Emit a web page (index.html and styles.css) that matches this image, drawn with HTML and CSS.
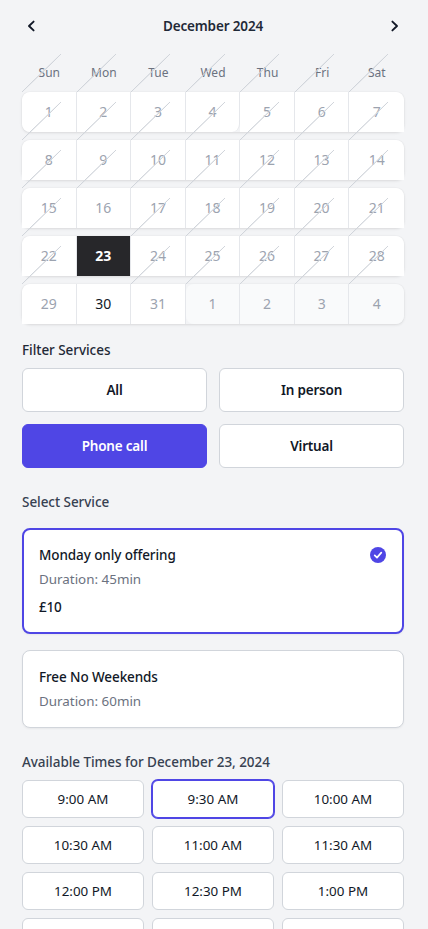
FILE: index.html
```html
<!DOCTYPE html>
<html lang="en">
<head>
<meta charset="utf-8">
<title>Book a service</title>
<link rel="stylesheet" href="styles.css">
</head>
<body>
<main class="page">
  <header class="month-bar">
    <button class="nav-btn" aria-label="Previous month"><svg viewBox="0 0 18 18" width="18" height="18"><path d="M11.6 4.6 7 9l4.6 4.4" class="chev"/></svg></button>
    <h1 class="month-title">December 2024</h1>
    <button class="nav-btn" aria-label="Next month"><svg viewBox="0 0 18 18" width="18" height="18"><path d="M6.4 4.6 11 9l-4.6 4.4" class="chev"/></svg></button>
  </header>

  <section class="calendar">
    <div class="weekdays">
      <div class="wd">Sun</div><div class="wd">Mon</div><div class="wd">Tue</div><div class="wd">Wed</div><div class="wd">Thu</div><div class="wd">Fri</div><div class="wd">Sat</div>
    </div>
    <div class="week">
      <div class="day off tl bl">1</div><div class="day off">2</div><div class="day off">3</div><div class="day off br">4</div><div class="day off">5</div><div class="day off">6</div><div class="day off tr">7</div>
    </div>
    <div class="week">
      <div class="day off tl">8</div><div class="day off">9</div><div class="day off">10</div><div class="day off">11</div><div class="day off">12</div><div class="day off">13</div><div class="day off tr">14</div>
    </div>
    <div class="week">
      <div class="day off tl">15</div><div class="day">16</div><div class="day off">17</div><div class="day off">18</div><div class="day off">19</div><div class="day off">20</div><div class="day off tr">21</div>
    </div>
    <div class="week">
      <div class="day off tl">22</div><div class="day selected">23</div><div class="day off">24</div><div class="day off">25</div><div class="day off">26</div><div class="day off">27</div><div class="day off tr">28</div>
    </div>
    <div class="week">
      <div class="day tl">29</div><div class="day active">30</div><div class="day">31</div><div class="day next tl bl">1</div><div class="day next">2</div><div class="day next">3</div><div class="day next tr br">4</div>
    </div>
  </section>

  <h2 class="label label-strong filter-label">Filter Services</h2>
  <div class="filters">
    <button class="filter">All</button>
    <button class="filter">In person</button>
    <button class="filter filter-on">Phone call</button>
    <button class="filter">Virtual</button>
  </div>

  <h2 class="label section-label">Select Service</h2>
  <div class="services">
    <article class="service service-on">
      <div class="service-head">
        <h3 class="service-name">Monday only offering</h3>
        <svg class="tick" viewBox="0 0 16 16" width="16" height="16"><circle cx="8" cy="8" r="8" fill="#4f46e5"/><path d="M4.7 8.3 7 10.6l4.3-5" fill="none" stroke="#fff" stroke-width="1.7" stroke-linecap="round" stroke-linejoin="round"/></svg>
      </div>
      <p class="service-meta">Duration: 45min</p>
      <p class="service-price">£10</p>
    </article>
    <article class="service">
      <h3 class="service-name">Free No Weekends</h3>
      <p class="service-meta">Duration: 60min</p>
    </article>
  </div>

  <h2 class="label section-label times-label">Available Times for December 23, 2024</h2>
  <div class="times">
    <button class="time">9:00 AM</button>
    <button class="time time-on">9:30 AM</button>
    <button class="time">10:00 AM</button>
    <button class="time">10:30 AM</button>
    <button class="time">11:00 AM</button>
    <button class="time">11:30 AM</button>
    <button class="time">12:00 PM</button>
    <button class="time">12:30 PM</button>
    <button class="time">1:00 PM</button>
    <button class="time" aria-hidden="true"></button>
    <button class="time" aria-hidden="true"></button>
    <button class="time" aria-hidden="true"></button>
  </div>
</main>
</body>
</html>
```
FILE: styles.css
```css
* { box-sizing: border-box; }
html, body { margin: 0; height: 100%; overflow: hidden; }
body {
  background: #f3f4f6;
  color: #111827;
  font-family: "Noto Sans", "Open Sans", sans-serif;
  font-size: 14px;
  line-height: 20px;
}
button { font: inherit; color: inherit; cursor: pointer; }
h1, h2, h3, p { margin: 0; }

.page { padding: 0 24px 0 22px; }

.month-bar { height: 53px; display: flex; align-items: center; justify-content: space-between; padding-bottom: 1px; }
.nav-btn { width: 18px; height: 18px; padding: 0; border: 0; background: none; display: flex; }
.chev { fill: none; stroke: #111827; stroke-width: 1.9; stroke-linecap: round; stroke-linejoin: round; }
.month-title { font-size: 13.5px; letter-spacing: -.15px; font-weight: 600; color: #1f2937; }

.calendar { display: flex; flex-direction: column; gap: 8px; }
.weekdays, .week { display: grid; grid-template-columns: repeat(7, 1fr); }
.weekdays { height: 39px; margin-bottom: -8px; }
.wd {
  position: relative;
  height: 39px;
  display: flex; align-items: center; justify-content: center;
  font-size: 12px; color: #6b7280;
}
.wd::after, .day.off::after {
  content: "";
  position: absolute;
  left: 0;
  width: 39px; height: 38px;
  background: linear-gradient(to top left, transparent calc(50% - .7px), #d1d5db calc(50% - .2px), #d1d5db calc(50% + .2px), transparent calc(50% + .7px));
  pointer-events: none;
}
.wd::after { top: 1px; }
.day.off::after { top: 10px; }

.week { border-radius: 8px; box-shadow: 0 1px 3px rgba(0, 0, 0, .1), 0 0 1px rgba(0, 0, 0, .12); }
.day {
  position: relative;
  height: 40px;
  display: flex; align-items: center; justify-content: center;
  background: #fff;
  border-right: 1px solid #e5e7eb;
  color: #9ca3af;
}
.day:last-child { border-right: 0; }
.day.active { color: #111827; }
.day.selected { background: #27272a; color: #fff; font-weight: 700; }
.day.next { background: #f9fafb; }
.tl { border-top-left-radius: 8px; }
.tr { border-top-right-radius: 8px; }
.bl { border-bottom-left-radius: 8px; }
.br { border-bottom-right-radius: 8px; }

.label { font-size: 13.5px; letter-spacing: -.05px; font-weight: 500; color: #374151; }
.label-strong { color: #1f2937; }
.filter-label { margin-top: 16px; }
.section-label { margin-top: 24px; }
.times-label { margin-top: 24px; }

.filters { margin-top: 8px; display: grid; grid-template-columns: 1fr 1fr; gap: 12px; }
.filter {
  height: 44px;
  background: #fff;
  border: 1px solid #d1d5db;
  border-radius: 6px;
  font-weight: 600;
  color: #111827;
  font-size: 13.5px;
  letter-spacing: -.2px;
}
.filter-on { background: #4f46e5; border-color: #4f46e5; color: #fff; }

.services { margin-top: 16px; display: flex; flex-direction: column; gap: 16px; }
.service {
  background: #fff;
  border: 1px solid #d1d5db;
  border-radius: 8px;
  padding: 16px;
  box-shadow: 0 1px 2px rgba(0, 0, 0, .05);
}
.service-on { border: 2px solid #4f46e5; padding: 15px; }
.service-head { display: flex; align-items: center; justify-content: space-between; }
.service-name { font-size: 13.5px; letter-spacing: -.1px; font-weight: 500; color: #111827; }
.tick { margin-right: 1px; }
.service-meta { margin-top: 4px; color: #6b7280; font-size: 13.4px; }
.service-price { margin-top: 8px; font-size: 13.5px; letter-spacing: -.2px; font-weight: 500; color: #111827; }

.times { margin-top: 8px; display: grid; grid-template-columns: repeat(3, 1fr); gap: 8px; }
.time {
  height: 38px;
  padding: 0;
  background: #fff;
  border: 1px solid #d1d5db;
  border-radius: 6px;
  color: #111827;
  font-size: 13.4px;
}
.time-on { border-color: #4f46e5; box-shadow: 0 0 0 1px #4f46e5; }
```
